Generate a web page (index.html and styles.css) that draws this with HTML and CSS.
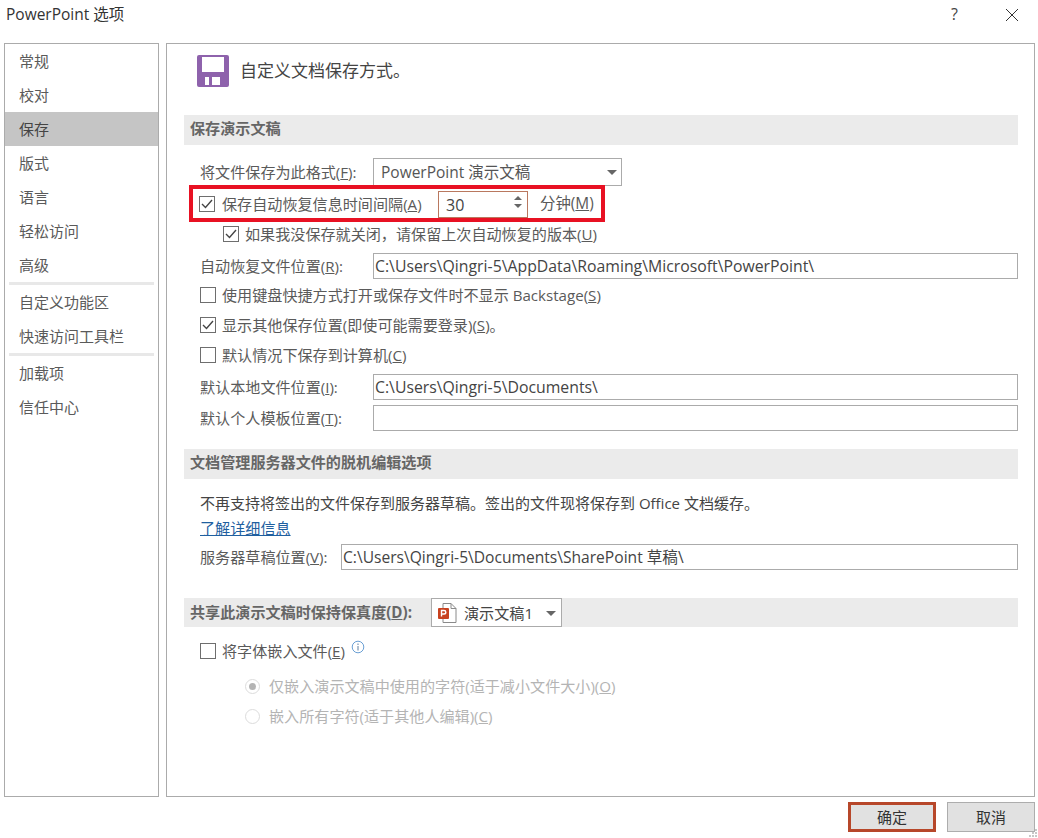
FILE: index.html
```html
<!DOCTYPE html>
<html lang="zh-CN">
<head>
<meta charset="utf-8">
<title>PowerPoint 选项</title>
<link rel="stylesheet" href="styles.css">
</head>
<body>
<div class="dialog">
  <header class="titlebar">
    <span class="title">PowerPoint 选项</span>
    <span class="help">?</span>
    <svg class="close" width="14" height="14" viewBox="0 0 14 14"><path d="M1 1L13 13M13 1L1 13" stroke="#333" stroke-width="1" fill="none"/></svg>
  </header>
  <div class="body">
    <nav class="sidebar">
      <div class="nav-item">常规</div>
      <div class="nav-item">校对</div>
      <div class="nav-item active">保存</div>
      <div class="nav-item">版式</div>
      <div class="nav-item">语言</div>
      <div class="nav-item">轻松访问</div>
      <div class="nav-item">高级</div>
      <div class="nav-sep"></div>
      <div class="nav-item">自定义功能区</div>
      <div class="nav-item">快速访问工具栏</div>
      <div class="nav-sep"></div>
      <div class="nav-item">加载项</div>
      <div class="nav-item">信任中心</div>
    </nav>
    <main class="content">
      <div class="heading">
        <svg class="save-icon" width="32" height="32" viewBox="0 0 32 32"><path fill-rule="evenodd" fill="#8e62ac" d="M2 0H30Q32 0 32 2V30Q32 32 30 32H2Q0 32 0 30V2Q0 0 2 0ZM5 2V17H27V2ZM8 22V30H12V22ZM15 22V30H23V22Z"/></svg>
        <span class="heading-text">自定义文档保存方式。</span>
      </div>

      <div class="section s1">保存演示文稿</div>
      <div class="row format-row">
        <label class="label w173">将文件保存为此格式(<u>F</u>):</label>
        <div class="select format-select"><span>PowerPoint 演示文稿</span><i class="caret"></i></div>
      </div>
      <div class="highlight">
        <span class="check on"><svg width="12" height="10" viewBox="0 0 12 10"><path d="M1 5L4.5 8.5L11 1" stroke="#444" stroke-width="1.4" fill="none"/></svg></span>
        <span class="clabel">保存自动恢复信息时间间隔(<u>A</u>)</span>
        <div class="spin"><span>30</span>
          <span class="arrows"><i class="up"></i><i class="down"></i></span>
        </div>
        <span class="unit">分钟(<u>M</u>)</span>
      </div>
      <div class="row sub-row">
        <span class="check on"><svg width="12" height="10" viewBox="0 0 12 10"><path d="M1 5L4.5 8.5L11 1" stroke="#444" stroke-width="1.4" fill="none"/></svg></span>
        <span class="clabel">如果我没保存就关闭，请保留上次自动恢复的版本(<u>U</u>)</span>
      </div>
      <div class="row field recover">
        <label class="label w173">自动恢复文件位置(<u>R</u>):</label>
        <div class="input">C:\Users\Qingri-5\AppData\Roaming\Microsoft\PowerPoint\</div>
      </div>
      <div class="row check-row first">
        <span class="check"></span>
        <span class="clabel">使用键盘快捷方式打开或保存文件时不显示 Backstage(<u>S</u>)</span>
      </div>
      <div class="row check-row">
        <span class="check on"><svg width="12" height="10" viewBox="0 0 12 10"><path d="M1 5L4.5 8.5L11 1" stroke="#444" stroke-width="1.4" fill="none"/></svg></span>
        <span class="clabel">显示其他保存位置(即使可能需要登录)(<u>S</u>)。</span>
      </div>
      <div class="row check-row">
        <span class="check"></span>
        <span class="clabel">默认情况下保存到计算机(<u>C</u>)</span>
      </div>
      <div class="row field local">
        <label class="label w173">默认本地文件位置(<u>I</u>):</label>
        <div class="input">C:\Users\Qingri-5\Documents\</div>
      </div>
      <div class="row field template">
        <label class="label w173">默认个人模板位置(<u>T</u>):</label>
        <div class="input"></div>
      </div>

      <div class="section s2">文档管理服务器文件的脱机编辑选项</div>
      <div class="row note"><span>不再支持将签出的文件保存到服务器草稿。签出的文件现将保存到 Office 文档缓存。</span></div>
      <div class="row link-row"><a class="link">了解详细信息</a></div>
      <div class="row field drafts">
        <label class="label w141">服务器草稿位置(<u>V</u>):</label>
        <div class="input">C:\Users\Qingri-5\Documents\SharePoint 草稿\</div>
      </div>

      <div class="section s3">
        <span class="s3-label">共享此演示文稿时保持保真度(<u>D</u>):</span>
        <div class="select doc-select">
          <svg width="24" height="24" viewBox="0 0 24 24"><path d="M8 2.5H16L21 7.5V21.5H8Z" fill="#fff" stroke="#8a8a8a" stroke-width="1"/><path d="M16 2.5V7.5H21" fill="none" stroke="#8a8a8a" stroke-width="1"/><rect x="3" y="7" width="11" height="11" rx="1" fill="#c8411f"/><path d="M6.5 15.5V9.5H9Q10.8 9.5 10.8 11.2Q10.8 13 9 13H6.5" fill="none" stroke="#fff" stroke-width="1.4"/></svg>
          <span class="doc-name">演示文稿1</span><i class="caret"></i>
        </div>
      </div>
      <div class="row check-row font-row">
        <span class="check"></span>
        <span class="clabel">将字体嵌入文件(<u>E</u>)</span>
        <svg class="info" width="14" height="14" viewBox="0 0 14 14"><circle cx="7" cy="7" r="5.8" fill="none" stroke="#6a9fd4" stroke-width="1"/><path d="M7 6V10.5M7 3.5V5" stroke="#5f7f9f" stroke-width="1"/></svg>
      </div>
      <div class="row radio-row r1"><span class="radio on"></span><span class="rlabel">仅嵌入演示文稿中使用的字符(适于减小文件大小)(<u>O</u>)</span></div>
      <div class="row radio-row"><span class="radio"></span><span class="rlabel">嵌入所有字符(适于其他人编辑)(<u>C</u>)</span></div>
    </main>
  </div>
  <footer class="footer">
    <button class="btn primary">确定</button>
    <button class="btn">取消</button>
  </footer>
  <svg class="grip" width="9" height="9" viewBox="0 0 9 9"><path d="M6 0h2v2H6zM3 3h2v2H3zM6 3h2v2H6zM0 6h2v2H0zM3 6h2v2H3zM6 6h2v2H6z" fill="#c8c8c8"/></svg>
</div>
</body>
</html>
```
FILE: styles.css
```css
* { box-sizing: border-box; }
html, body { margin: 0; padding: 0; background: #fff; }
body {
  font-family: "Open Sans", "Noto Sans CJK SC", sans-serif;
  font-size: 15.1px;
  color: #5a5a5a;
  overflow: hidden;
}
.dialog { position: relative; width: 1038px; height: 838px; display: flex; flex-direction: column; }
.titlebar { height: 43px; display: flex; align-items: flex-start; padding-left: 6px; flex: none; }
.title { font-size: 15.5px; line-height: 29px; color: #333; width: 945px; }
.help { font-size: 16px; line-height: 29px; color: #444; width: 54px; }
.close { margin-top: 8px; }
.body { display: flex; height: 754px; flex: none; padding-left: 4px; }
.sidebar { width: 155px; border: 1px solid #ababab; display: flex; flex-direction: column; }
.nav-item { height: 34px; line-height: 34px; padding-left: 14px; font-size: 15px; flex: none; }
.nav-item.active { background: #c5c5c5; color: #444; }
.nav-sep { height: 3px; margin: 0 4px; background: #e8e8e8; flex: none; }
.content { margin-left: 7px; width: 869px; border: 1px solid #ababab; padding: 0 16px 0 17px; display: flex; flex-direction: column; }
.heading { margin-top: 11px; height: 32px; padding-left: 13px; display: flex; align-items: center; flex: none; font-size: 17px; color: #444; }
.heading-text { padding-bottom: 4px; }
.save-icon { margin-right: 11px; flex: none; }
.section { background: #ebebeb; padding: 0 0 6px 6px; font-weight: 700; font-size: 15.1px; color: #666; display: flex; align-items: center; flex: none; height: 30px; }
.s1 { margin-top: 28px; }
.s2 { margin-top: 18px; }
.s3 { margin-top: 28px; height: 29px; padding-bottom: 0; }
.s3-label { width: 241px; flex: none; white-space: nowrap; padding-bottom: 3px; }
.row { display: flex; align-items: center; flex: none; padding-left: 16px; }
.label { flex: none; white-space: nowrap; padding-bottom: 2px; }
.w173 { width: 173px; }
.w141 { width: 141px; }
.format-row { margin-top: 13px; height: 28px; }
.select { border: 1px solid #ababab; background: #fff; display: flex; align-items: center; position: relative; }
.format-select { width: 249px; height: 28px; padding: 0 0 2px 7px; font-size: 15.5px; color: #555; }
.caret { position: absolute; right: 4px; top: 11px; width: 0; height: 0; border-left: 5px solid transparent; border-right: 5px solid transparent; border-top: 5px solid #666; }
.highlight { margin: -1px 0 0 5px; width: 416px; height: 37px; flex: none; border: 4px solid #e81123; display: flex; align-items: center; padding-left: 6px; position: relative; z-index: 1; background: #fff; }
.check { width: 16px; height: 16px; border: 1px solid #6e6e6e; background: #fff; flex: none; display: flex; align-items: center; justify-content: center; margin-right: 7px; }
.clabel { white-space: nowrap; padding-bottom: 2px; margin-left: -1px; }
.highlight .clabel { width: 216px; margin-left: 0; }
.unit { padding-bottom: 2px; white-space: nowrap; font-size: 15.4px; }
.spin { width: 90px; height: 27px; margin-top: 1px; border: 1px solid #b9785f; display: flex; align-items: center; padding: 2px 0 0 7px; font-size: 16px; color: #444; position: relative; margin-right: 12px; flex: none; }
.arrows { position: absolute; right: 5px; top: 4px; display: flex; flex-direction: column; gap: 4px; }
.arrows i { display: block; width: 0; height: 0; border-left: 4px solid transparent; border-right: 4px solid transparent; }
.arrows .up { border-bottom: 4px solid #666; }
.arrows .down { border-top: 4px solid #666; }
.sub-row { height: 24px; padding-left: 39px; }
.field .input { flex: 1; height: 26px; border: 1px solid #ababab; padding-left: 1px; line-height: 24px; font-size: 15.8px; color: #444; white-space: nowrap; overflow: hidden; }
.recover { margin-top: 7px; }
.first { margin-top: 1px; }
.check-row { height: 30px; }
.local { margin-top: 4px; }
.template { margin-top: 5px; }
.note { margin-top: 10px; height: 28px; color: #444; white-space: nowrap; font-size: 15px; }
.note span { padding-bottom: 2px; }
.link-row { height: 22px; }
.link { color: #1f5f9f; text-decoration: underline; padding-bottom: 2px; }
.drafts { margin-top: 5px; }
.field.drafts .input { font-size: 15.6px; }
.doc-select { width: 131px; height: 29px; padding-left: 3px; font-weight: 400; color: #444; font-size: 15.1px; gap: 5px; }
.doc-name { padding-bottom: 2px; }
.doc-select .caret { right: 5px; top: 12px; }
.font-row { margin-top: 9px; }
.info { margin: -8px 0 0 6px; }
.radio-row { height: 30px; padding-left: 61px; color: #b4b4b4; white-space: nowrap; }
.rlabel { padding-bottom: 2px; }
.r1 { margin-top: 5px; }
.radio { width: 15px; height: 15px; border-radius: 50%; border: 1px solid #dcdcdc; margin-right: 9px; flex: none; display: flex; align-items: center; justify-content: center; }
.radio.on::after { content: ""; width: 7px; height: 7px; border-radius: 50%; background: #b4b4b4; }
.footer { flex: none; height: 41px; display: flex; justify-content: flex-end; gap: 11px; padding: 5px 3px 0 0; }
.btn { width: 88px; height: 30px; background: #e1e1e1; border: 1px solid #adadad; font: inherit; font-size: 15px; color: #333; padding: 0 0 2px; }
.btn.primary { border: 3px solid #b7472a; }
.grip { position: absolute; right: 0; bottom: 0; }
```
